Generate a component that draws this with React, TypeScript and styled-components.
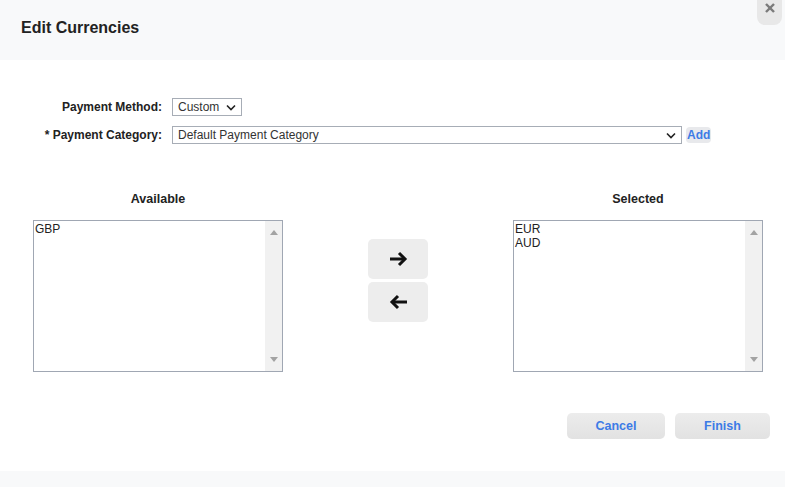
import React from 'react'
import styled, { createGlobalStyle } from 'styled-components'

const GlobalStyle = createGlobalStyle`
  html, body {
    margin: 0;
    padding: 0;
    background: #ffffff;
    font-family: "Liberation Sans", Arial, sans-serif;
  }
`

const available = ['GBP']
const selected = ['EUR', 'AUD']

function Chevron() {
  return (
    <svg width="10" height="7" viewBox="0 0 10 7">
      <polyline
        points="1,1.5 5,5.5 9,1.5"
        fill="none"
        stroke="#222"
        strokeWidth="1.6"
      />
    </svg>
  )
}

function Arrow({ dir }: { dir: 'left' | 'right' }) {
  return (
    <svg
      width="19"
      height="16"
      viewBox="0 0 19 16"
      style={{ transform: dir === 'left' ? 'scaleX(-1)' : undefined }}
    >
      <line x1="1" y1="8" x2="16" y2="8" stroke="#111" strokeWidth="3" />
      <polyline
        points="10,2 16,8 10,14"
        fill="none"
        stroke="#111"
        strokeWidth="3"
      />
    </svg>
  )
}

function ListBox({ items }: { items: string[] }) {
  return (
    <StyledListBox>
      <StyledItems>
        {items.map((item) => (
          <StyledItem key={item}>{item}</StyledItem>
        ))}
      </StyledItems>
      <StyledScrollbar>
        <StyledTriangle $up />
        <StyledTriangle />
      </StyledScrollbar>
    </StyledListBox>
  )
}

export default function App() {
  return (
    <>
      <GlobalStyle />
      <Dialog>
        <Header>
          <Title>Edit Currencies</Title>
          <CloseButton aria-label="close">
            <svg width="10" height="10" viewBox="0 0 10 10">
              <line x1="1" y1="1" x2="9" y2="9" stroke="#7a7a7a" strokeWidth="2.4" />
              <line x1="9" y1="1" x2="1" y2="9" stroke="#7a7a7a" strokeWidth="2.4" />
            </svg>
          </CloseButton>
        </Header>
        <Body>
          <FormGrid>
            <Label>Payment Method:</Label>
            <Field>
              <Select $width={70}>
                <span>Custom</span>
                <Chevron />
              </Select>
            </Field>
            <Label>* Payment Category:</Label>
            <Field>
              <Select $width={510}>
                <span>Default Payment Category</span>
                <Chevron />
              </Select>
              <AddButton>Add</AddButton>
            </Field>
          </FormGrid>
          <Columns>
            <Column>
              <ColumnTitle>Available</ColumnTitle>
              <ListBox items={available} />
            </Column>
            <MoveButtons>
              <MoveButton>
                <Arrow dir="right" />
              </MoveButton>
              <MoveButton>
                <Arrow dir="left" />
              </MoveButton>
            </MoveButtons>
            <Column>
              <ColumnTitle>Selected</ColumnTitle>
              <ListBox items={selected} />
            </Column>
          </Columns>
          <Actions>
            <ActionButton $width={98}>Cancel</ActionButton>
            <ActionButton $width={95}>Finish</ActionButton>
          </Actions>
        </Body>
        <Footer />
      </Dialog>
    </>
  )
}

const Dialog = styled.div`
  position: relative;
  width: 785px;
  height: 487px;
  display: flex;
  flex-direction: column;
  background: #ffffff;
  overflow: hidden;
`

const Header = styled.div`
  height: 60px;
  flex-shrink: 0;
  display: flex;
  align-items: center;
  padding-left: 21px;
  background: #f8f9fa;
`

const Title = styled.h1`
  margin: 0 0 4px;
  font-size: 16px;
  font-weight: bold;
  color: #222;
`

const CloseButton = styled.button`
  position: absolute;
  top: -10px;
  right: 3px;
  width: 25px;
  height: 35px;
  border: none;
  border-radius: 8px;
  background: #e8e8e8;
  display: flex;
  align-items: flex-end;
  justify-content: center;
  padding: 0 0 12px;
`

const Body = styled.div`
  flex: 1;
  display: flex;
  flex-direction: column;
`

const FormGrid = styled.div`
  margin-top: 38px;
  display: grid;
  grid-template-columns: 162px auto;
  column-gap: 10px;
  row-gap: 10px;
  align-items: center;
`

const Label = styled.div`
  text-align: right;
  font-size: 12px;
  font-weight: bold;
  color: #222;
`

const Field = styled.div`
  display: flex;
  align-items: center;
  gap: 4px;
`

const Select = styled.div<{ $width: number }>`
  box-sizing: border-box;
  width: ${({ $width }) => $width}px;
  height: 18px;
  border: 1px solid #a7adb6;
  display: flex;
  align-items: center;
  justify-content: space-between;
  padding: 0 5px 0 5px;
  font-size: 12px;
  color: #333;
  background: #fff;
`

const AddButton = styled.div`
  height: 16px;
  padding: 0 1px;
  display: flex;
  align-items: center;
  border-radius: 4px;
  background: #e8e9ec;
  font-size: 12px;
  font-weight: bold;
  color: #3d7be6;
`

const Columns = styled.div`
  margin-top: 48px;
  padding-left: 33px;
  display: grid;
  grid-template-columns: 250px 60px 250px;
  column-gap: 85px;
  align-items: start;
`

const Column = styled.div`
  display: flex;
  flex-direction: column;
`

const ColumnTitle = styled.div`
  height: 14px;
  margin-bottom: 14px;
  text-align: center;
  font-size: 12.5px;
  font-weight: bold;
  color: #222;
  line-height: 14px;
`

const StyledListBox = styled.div`
  box-sizing: border-box;
  height: 152px;
  border: 1px solid #a0a7b3;
  display: flex;
`

const StyledItems = styled.div`
  flex: 1;
  padding: 1px 1px;
`

const StyledItem = styled.div`
  font-size: 12px;
  line-height: 14px;
  color: #222;
`

const StyledScrollbar = styled.div`
  width: 17px;
  background: #f1f1f1;
  display: flex;
  flex-direction: column;
  justify-content: space-between;
  align-items: center;
  padding: 9px 0 9px;
`

const StyledTriangle = styled.div<{ $up?: boolean }>`
  width: 0;
  height: 0;
  border-left: 4.5px solid transparent;
  border-right: 4.5px solid transparent;
  ${({ $up }) =>
    $up ? 'border-bottom: 5px solid #a3a3a3;' : 'border-top: 5px solid #a3a3a3;'}
`

const MoveButtons = styled.div`
  padding-top: 47px;
  display: flex;
  flex-direction: column;
  gap: 3px;
`

const MoveButton = styled.div`
  height: 40px;
  border-radius: 5px;
  background: #ededed;
  display: flex;
  align-items: center;
  justify-content: center;
`

const Actions = styled.div`
  margin-top: 41px;
  padding-right: 15px;
  display: flex;
  justify-content: flex-end;
  gap: 10px;
`

const ActionButton = styled.div<{ $width: number }>`
  width: ${({ $width }) => $width}px;
  height: 26px;
  border-radius: 5px;
  background: linear-gradient(#ececec, #e2e2e2);
  display: flex;
  align-items: center;
  justify-content: center;
  font-size: 12.5px;
  font-weight: bold;
  color: #3d7be6;
`

const Footer = styled.div`
  height: 16px;
  flex-shrink: 0;
  background: #f8f9fa;
`
